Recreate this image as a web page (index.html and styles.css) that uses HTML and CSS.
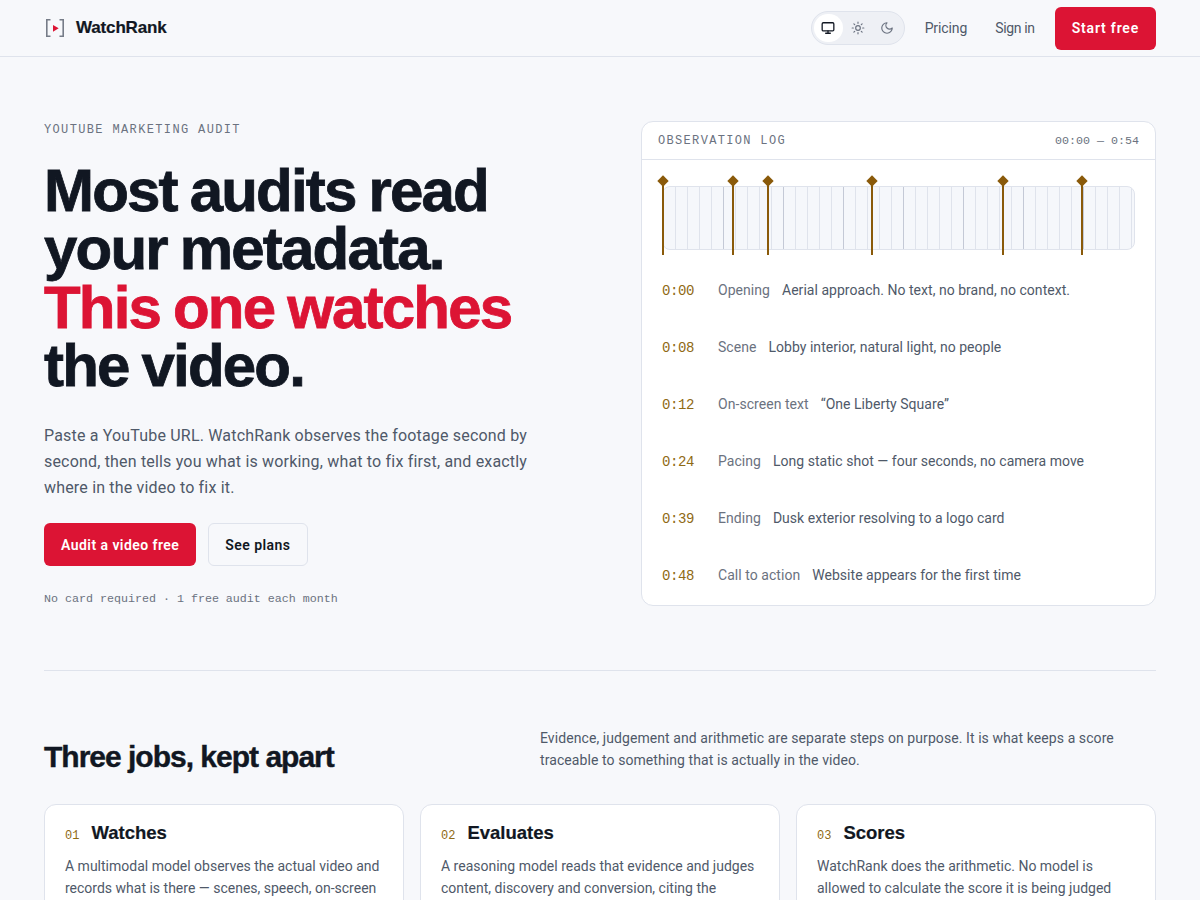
FILE: index.html
```html
<!DOCTYPE html>
<html lang="en">
<head>
    <meta charset="UTF-8">
    <meta name="viewport" content="width=device-width, initial-scale=1.0">
    <title>WatchRank</title>
    <link rel="stylesheet" href="styles.css">
</head>
<body>
    <header class="header">
        <a href="#" class="brand">
            <svg class="brand-mark" width="22" height="22" viewBox="0 0 22 22" fill="none">
                <path d="M6.5 2.7H2.8v16.6h3.7M15.5 2.7h3.7v16.6h-3.7" stroke="#767c88" stroke-width="1.6"/>
                <path d="M9 8l5.7 3.3L9 14.7z" fill="#dc1434"/>
            </svg>
            WatchRank
        </a>
        <div class="header-actions">
            <div class="theme-toggle">
                <button class="theme-btn active">
                    <svg width="14" height="14" viewBox="0 0 24 24" fill="none" stroke="currentColor" stroke-width="2.2" stroke-linecap="round" stroke-linejoin="round"><rect x="2" y="3" width="20" height="14" rx="2"/><path d="M8 21h8M12 17v4"/></svg>
                </button>
                <button class="theme-btn">
                    <svg width="14" height="14" viewBox="0 0 24 24" fill="none" stroke="currentColor" stroke-width="2" stroke-linecap="round" stroke-linejoin="round"><circle cx="12" cy="12" r="4"/><path d="M12 2v2M12 20v2M4.93 4.93l1.41 1.41M17.66 17.66l1.41 1.41M2 12h2M20 12h2M6.34 17.66l-1.41 1.41M19.07 4.93l-1.41 1.41"/></svg>
                </button>
                <button class="theme-btn">
                    <svg width="14" height="14" viewBox="0 0 24 24" fill="none" stroke="currentColor" stroke-width="2" stroke-linecap="round" stroke-linejoin="round"><path d="M12 3a6 6 0 0 0 9 9 9 9 0 1 1-9-9z"/></svg>
                </button>
            </div>
            <a href="#" class="nav-link">Pricing</a>
            <a href="#" class="nav-link">Sign in</a>
            <a href="#" class="btn primary">Start free</a>
        </div>
    </header>

    <main class="content">
        <section class="hero">
            <div class="hero-copy">
                <div class="eyebrow">YOUTUBE MARKETING AUDIT</div>
                <h1 class="hero-title">Most audits read your metadata. <em>This one watches</em> the video.</h1>
                <p class="hero-text">Paste a YouTube URL. WatchRank observes the footage second by second, then tells you what is working, what to fix first, and exactly where in the video to fix it.</p>
                <div class="hero-buttons">
                    <a href="#" class="btn primary">Audit a video free</a>
                    <a href="#" class="btn secondary">See plans</a>
                </div>
                <div class="hero-note">No card required · 1 free audit each month</div>
            </div>

            <div class="log-card">
                <div class="log-header">
                    <span class="log-title">OBSERVATION LOG</span>
                    <span class="log-range">00:00 — 0:54</span>
                </div>
                <div class="timeline">
                    <div class="strip"></div>
                    <span class="marker" style="left: 0%"></span>
                    <span class="marker" style="left: 14.8%"></span>
                    <span class="marker" style="left: 22.2%"></span>
                    <span class="marker" style="left: 44.2%"></span>
                    <span class="marker" style="left: 71.9%"></span>
                    <span class="marker" style="left: 88.6%"></span>
                </div>
                <ul class="log-list">
                    <li class="log-row"><span class="log-time">0:00</span><span class="log-label">Opening</span><span class="log-text">Aerial approach. No text, no brand, no context.</span></li>
                    <li class="log-row"><span class="log-time">0:08</span><span class="log-label">Scene</span><span class="log-text">Lobby interior, natural light, no people</span></li>
                    <li class="log-row"><span class="log-time">0:12</span><span class="log-label">On-screen text</span><span class="log-text">“One Liberty Square”</span></li>
                    <li class="log-row"><span class="log-time">0:24</span><span class="log-label">Pacing</span><span class="log-text">Long static shot — four seconds, no camera move</span></li>
                    <li class="log-row"><span class="log-time">0:39</span><span class="log-label">Ending</span><span class="log-text">Dusk exterior resolving to a logo card</span></li>
                    <li class="log-row"><span class="log-time">0:48</span><span class="log-label">Call to action</span><span class="log-text">Website appears for the first time</span></li>
                </ul>
            </div>
        </section>

        <section class="jobs">
            <div class="jobs-head">
                <h2 class="jobs-title">Three jobs, kept apart</h2>
                <p class="jobs-text">Evidence, judgement and arithmetic are separate steps on purpose. It is what keeps a score traceable to something that is actually in the video.</p>
            </div>
            <div class="jobs-grid">
                <div class="job-card">
                    <div class="job-head"><span class="job-num">01</span><h3 class="job-name">Watches</h3></div>
                    <p class="job-text">A multimodal model observes the actual video and records what is there — scenes, speech, on-screen</p>
                </div>
                <div class="job-card">
                    <div class="job-head"><span class="job-num">02</span><h3 class="job-name">Evaluates</h3></div>
                    <p class="job-text">A reasoning model reads that evidence and judges content, discovery and conversion, citing the</p>
                </div>
                <div class="job-card">
                    <div class="job-head"><span class="job-num">03</span><h3 class="job-name">Scores</h3></div>
                    <p class="job-text">WatchRank does the arithmetic. No model is allowed to calculate the score it is being judged</p>
                </div>
            </div>
        </section>
    </main>
</body>
</html>
```

FILE: styles.css
```css
:root {
    --bg: #f7f8fb;
    --ink: #111722;
    --muted: #4f5969;
    --faint: #6b7280;
    --line: #dfe3ec;
    --crimson: #dc1434;
    --amber: #8a5a0a;
    --amber-text: #8f6a14;
}

* {
    margin: 0;
    padding: 0;
    box-sizing: border-box;
}

body {
    font-family: Roboto, 'Noto Sans', sans-serif;
    background: var(--bg);
    color: var(--ink);
    font-size: 14px;
}

a {
    text-decoration: none;
    color: inherit;
}

.header {
    height: 57px;
    padding: 0 44px;
    display: flex;
    justify-content: space-between;
    align-items: center;
    border-bottom: 1px solid var(--line);
}

.brand {
    display: flex;
    align-items: center;
    gap: 10px;
    font-family: 'Liberation Sans', sans-serif;
    font-size: 17px;
    font-weight: 700;
    letter-spacing: -0.15px;
    -webkit-text-stroke: 0.2px;
}

.brand-mark {
    flex-shrink: 0;
}

.header-actions {
    display: flex;
    align-items: center;
}

.theme-toggle {
    display: flex;
    width: 94px;
    height: 34px;
    padding: 2px;
    background: #eef0f5;
    border: 1px solid var(--line);
    border-radius: 17px;
    margin-right: 20px;
}

.theme-btn {
    width: 30px;
    height: 28px;
    border: none;
    border-radius: 14px;
    background: none;
    color: var(--faint);
    display: flex;
    align-items: center;
    justify-content: center;
    cursor: pointer;
}

.theme-btn.active {
    background: #fff;
    color: var(--ink);
}

.nav-link {
    color: var(--muted);
    margin-right: 28px;
    letter-spacing: -0.35px;
}

.theme-toggle + .nav-link {
    letter-spacing: -0.1px;
}

.nav-link + .btn {
    margin-left: -8px;
    letter-spacing: 0.8px;
}

.btn {
    display: inline-flex;
    align-items: center;
    height: 43px;
    padding: 0 16px;
    border-radius: 6px;
    font-size: 14px;
    font-weight: 600;
    letter-spacing: 0.45px;
    border: 1px solid transparent;
}

.btn.primary {
    background: var(--crimson);
    color: #fff;
}

.btn.secondary {
    border-color: var(--line);
    color: var(--ink);
}

.content {
    padding: 0 44px;
}

.hero {
    display: grid;
    grid-template-columns: 1fr 515px;
    gap: 40px;
    padding: 64px 0;
    border-bottom: 1px solid var(--line);
}

.eyebrow {
    font-family: 'Liberation Mono', monospace;
    font-size: 12px;
    letter-spacing: 1.36px;
    color: var(--faint);
    line-height: 18px;
}

.hero-title {
    font-family: 'Liberation Sans', sans-serif;
    font-size: 60px;
    line-height: 58.3px;
    font-weight: 700;
    letter-spacing: -1.8px;
    word-spacing: -2px;
    -webkit-text-stroke: 0.8px;
    margin-top: 23px;
    max-width: 490px;
}

.hero-title em {
    font-style: normal;
    color: var(--crimson);
}

.hero-text {
    font-size: 16px;
    line-height: 26px;
    letter-spacing: 0.18px;
    color: var(--muted);
    margin-top: 28px;
    max-width: 500px;
}

.hero-buttons {
    display: flex;
    gap: 12px;
    margin-top: 22px;
}

.hero-note {
    font-family: 'Liberation Mono', monospace;
    font-size: 11.67px;
    color: var(--faint);
    margin-top: 26px;
}

.log-card {
    background: #fff;
    border: 1px solid var(--line);
    border-radius: 12px;
    overflow: hidden;
}

.log-header {
    height: 38px;
    padding: 0 16px;
    display: flex;
    justify-content: space-between;
    align-items: center;
    border-bottom: 1px solid var(--line);
    font-family: 'Liberation Mono', monospace;
    font-size: 12px;
    color: var(--faint);
}

.log-title {
    letter-spacing: 1.33px;
}

.log-range {
    font-size: 11.67px;
}

.timeline {
    position: relative;
    height: 64px;
    margin: 26px 20px 0;
}

.strip {
    height: 100%;
    border: 1px solid var(--line);
    border-radius: 8px;
    background:
        repeating-linear-gradient(90deg, transparent 0 59px, #c4c9d6 59px 60px) 1px 0,
        repeating-linear-gradient(90deg, transparent 0 11px, var(--line) 11px 12px) 1px 0,
        #f5f7fb;
}

.marker {
    position: absolute;
    top: -5px;
    bottom: -5px;
    width: 2px;
    background: var(--amber);
}

.marker::before {
    content: "";
    position: absolute;
    top: -4px;
    left: -3px;
    width: 8px;
    height: 8px;
    background: var(--amber);
    transform: rotate(45deg);
}

.log-list {
    list-style: none;
    padding: 11px 20px 2px;
}

.log-row {
    height: 57px;
    display: flex;
    align-items: center;
    gap: 12px;
}

.log-time {
    width: 44px;
    margin-top: 2px;
    font-family: 'Liberation Mono', monospace;
    font-size: 14px;
    letter-spacing: -0.4px;
    color: var(--amber-text);
}

.log-label {
    color: var(--faint);
    letter-spacing: 0.05px;
}

.log-text {
    color: var(--muted);
    letter-spacing: 0.03px;
}

.jobs {
    padding-top: 56px;
}

.jobs-head {
    display: grid;
    grid-template-columns: 496px 1fr;
    align-items: end;
}

.jobs-title {
    font-family: 'Liberation Sans', sans-serif;
    font-size: 30px;
    line-height: 28px;
    font-weight: 700;
    letter-spacing: -1px;
    -webkit-text-stroke: 0.4px;
}

.jobs-text {
    line-height: 22px;
    letter-spacing: 0.08px;
    color: var(--muted);
}

.jobs-grid {
    display: grid;
    grid-template-columns: repeat(3, 1fr);
    gap: 16px;
    margin-top: 33px;
}

.job-card {
    background: #fff;
    border: 1px solid var(--line);
    border-radius: 12px;
    padding: 17px 20px 20px;
}

.job-head {
    display: flex;
    align-items: baseline;
    gap: 12px;
}

.job-num {
    font-family: 'Liberation Mono', monospace;
    font-size: 12px;
    color: var(--amber-text);
}

.job-name {
    font-family: 'Liberation Sans', sans-serif;
    font-size: 18.5px;
    font-weight: 700;
    -webkit-text-stroke: 0.2px;
}

.job-text {
    line-height: 22px;
    color: var(--muted);
    margin-top: 11px;
}
```
